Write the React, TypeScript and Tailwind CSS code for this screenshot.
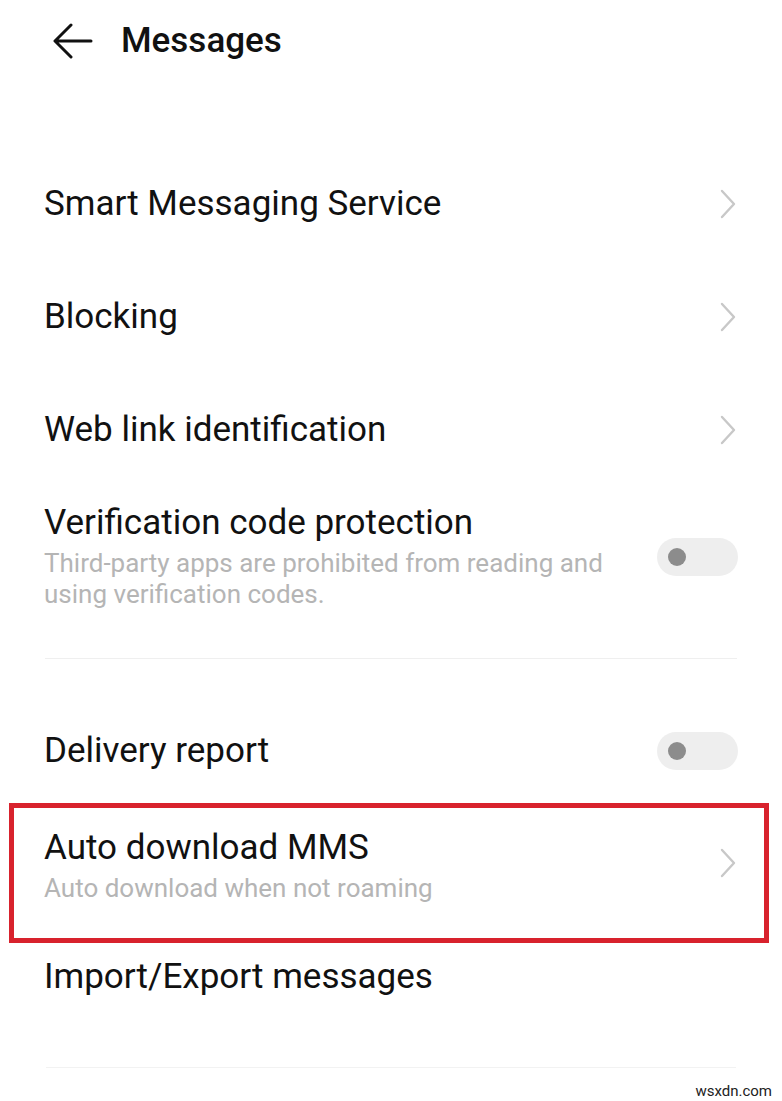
import React from "react"

const font = { fontFamily: "Roboto, 'Noto Sans', sans-serif" }

function Chevron({ className = "" }: { className?: string }) {
  return (
    <svg width="16" height="30" viewBox="0 0 16 30" fill="none" className={"shrink-0 " + className}>
      <polyline
        points="2,2 14,15 2,28"
        stroke="#c8c8c8"
        strokeWidth="2.4"
        strokeLinecap="round"
        strokeLinejoin="round"
      />
    </svg>
  )
}

function Toggle() {
  return (
    <div className="w-[81px] h-[38px] rounded-full bg-[#eeeeee] flex items-center pl-[11px] shrink-0">
      <div className="w-[18px] h-[18px] rounded-full bg-[#8c8c8c]" />
    </div>
  )
}

function NavRow({ label }: { label: string }) {
  return (
    <div className="h-[113px] flex items-center justify-between pl-[44px] pr-[46px]">
      <span className="text-[35px] leading-[40px] text-[#111111]">{label}</span>
      <Chevron />
    </div>
  )
}

export default function App() {
  return (
    <div className="w-[782px] h-[1101px] bg-white overflow-hidden" style={font}>
      <header className="h-[82px] flex items-center pl-[53px] gap-[28px]">
        <svg width="40" height="36" viewBox="0 0 40 36" fill="none">
          <path
            d="M38 18H3M18 2L2 18L18 34"
            stroke="#111111"
            strokeWidth="3"
            strokeLinecap="round"
            strokeLinejoin="round"
          />
        </svg>
        <h1 className="text-[35px] font-medium text-[#111111]">Messages</h1>
      </header>

      <div className="h-[65px]" />

      <NavRow label="Smart Messaging Service" />
      <NavRow label="Blocking" />
      <NavRow label="Web link identification" />

      <div className="flex items-center justify-between pl-[44px] pr-[44px] pt-[17px] pb-[10px]">
        <div>
          <div className="text-[35px] leading-[40px] text-[#111111]">Verification code protection</div>
          <div className="mt-[5px] text-[26px] leading-[31px] text-[#b5b5b5] w-[590px]">
            Third-party apps are prohibited from reading and using verification codes.
          </div>
        </div>
        <Toggle />
      </div>

      <div className="mt-[38px] mx-[45px] h-px bg-[#efefef]" />

      <div className="h-[52px]" />

      <div className="h-[80px] flex items-center justify-between pl-[44px] pr-[44px]">
        <span className="text-[35px] leading-[40px] text-[#111111]">Delivery report</span>
        <Toggle />
      </div>

      <div className="mt-[12px] mx-[9px] w-[760px] h-[140px] border-[5px] border-[#d8222d] flex items-center justify-between pl-[30px] pr-[28px]">
        <div className="pb-[14px]">
          <div className="text-[35px] leading-[40px] text-[#111111]">Auto download MMS</div>
          <div className="mt-[5px] text-[26px] leading-[31px] text-[#b5b5b5]">Auto download when not roaming</div>
        </div>
        <Chevron className="mb-[20px]" />
      </div>

      <div className="h-[68px] flex items-center pl-[44px]">
        <span className="text-[35px] leading-[40px] text-[#111111]">Import/Export messages</span>
      </div>

      <div className="mt-[56px] mx-[46px] h-px bg-[#f2f2f2]" />

      <div className="flex justify-end pr-[10px] pt-[14px]">
        <span className="text-[15px] leading-[18px] text-[#222222]">wsxdn.com</span>
      </div>
    </div>
  )
}
